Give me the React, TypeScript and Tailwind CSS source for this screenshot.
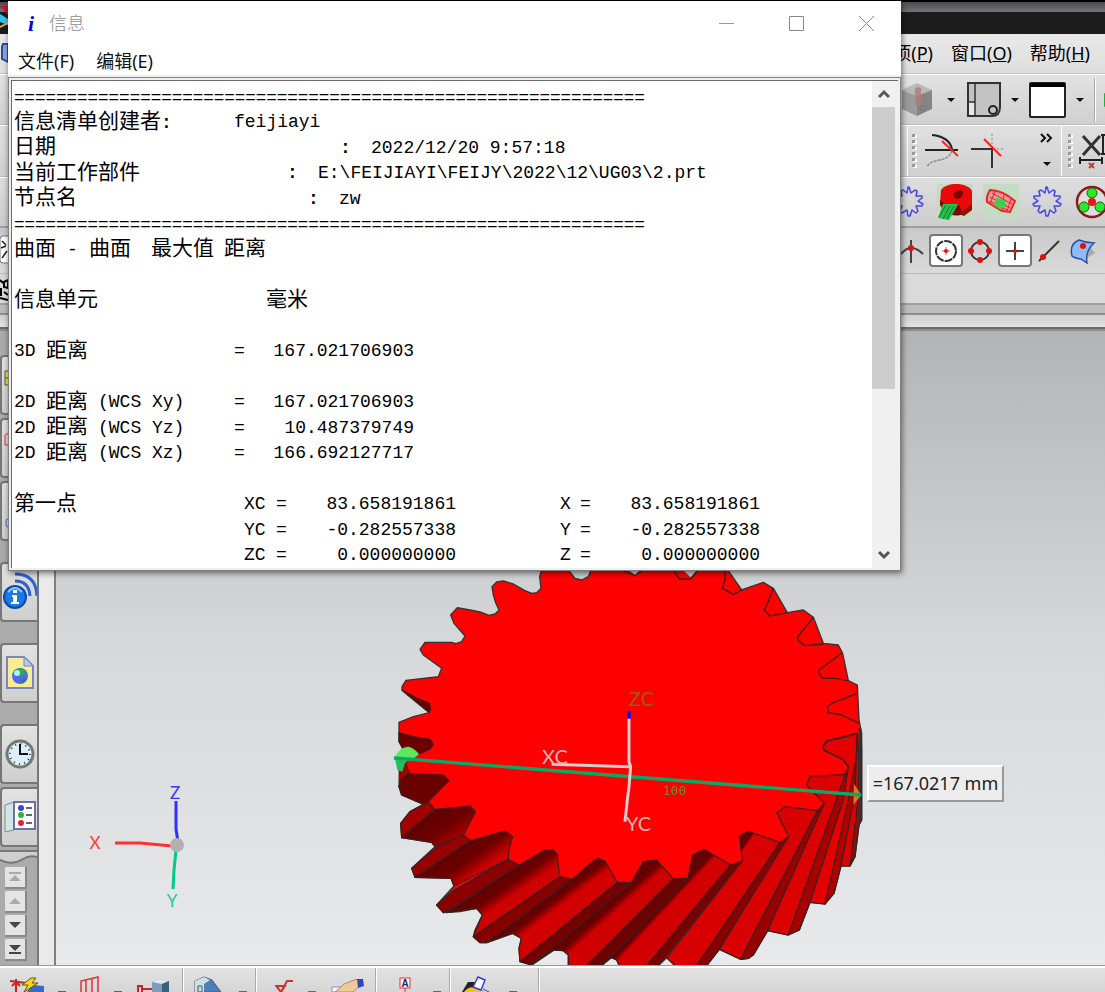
import React from "react";
import clsx from "clsx";

const UI_FONT = "font-['Noto_Sans','Noto_Sans_CJK_SC',sans-serif]";
const LIST_FONT = "font-['Liberation_Mono','Noto_Sans_CJK_SC',monospace]";

interface IconProps {
  width: number;
  height: number;
  className?: string;
  children: React.ReactNode;
}

const Icon = ({ width, height, className, children }: IconProps) => (
  <svg
    width={width}
    height={height}
    viewBox={`0 0 ${width} ${height}`}
    fill="none"
    className={clsx("block shrink-0", className)}
    aria-hidden="true"
  >
    {children}
  </svg>
);

interface ToolProps {
  label: string;
  className?: string;
  children: React.ReactNode;
}

const Tool = ({ label, className, children }: ToolProps) => (
  <button
    type="button"
    aria-label={label}
    className={clsx("flex shrink-0 items-center justify-center", className)}
  >
    {children}
  </button>
);

const Caret = () => (
  <Icon width={8} height={4}>
    <path d="M0 0h8L4 4z" fill="#111" />
  </Icon>
);

const Grip = () => (
  <Icon width={5} height={36}>
    {[1, 7, 13, 19, 25, 31].map((y) => (
      <g key={y}>
        <rect x="1" y={y + 1} width="4" height="3" fill="#fff" />
        <rect x="0" y={y} width="3" height="3" fill="#999" />
      </g>
    ))}
  </Icon>
);

const GearOutline = () => (
  <Icon width={32} height={34}>
    <path
      d="M15 2l1 0 2 6 4-3 2 1-1 5 6 0 0 2-4 3 5 3-1 2-6 0 2 5-2 2-4-3-2 6-2 0-1-6-5 3-2-2 2-5-6 0-1-2 5-3-4-3 0-2 6 0-1-5 2-1 4 3z"
      stroke="#4646ee"
      strokeWidth="1.5"
      strokeLinejoin="round"
    />
  </Icon>
);

const rowClass = "flex shrink-0 items-stretch justify-between overflow-hidden";
const rightClass = "flex w-[204px] items-center";

const TopBars = () => (
  <header className="shrink-0">
    <div className="flex h-[34px] flex-col border-t-2 border-black bg-[#1c1c1c]">
      <div className="h-2.5 bg-linear-to-b from-[#4c4c50] to-[#747478]" />
      <Icon width={8} height={22} className="-mt-1.5">
        <path d="M0 0h8v9z" fill="#d0103a" />
        <path d="M0 8l8 5v6l-8-3z" fill="#33c5ee" />
        <path d="M0 20l8-4v2l-8 4z" fill="#e6b03c" />
      </Icon>
    </div>

    <nav
      className={clsx(
        rowClass,
        UI_FONT,
        "h-10 border-b border-[#c2c2c2] bg-linear-to-b from-[#e9e9e9] to-[#dedede] text-[18px] text-black",
      )}
    >
      <Icon width={8} height={34}>
        <path d="M8 10H3l-1 3v12l6 3z" fill="#88a8e0" stroke="#2a4b9a" strokeWidth="2" />
      </Icon>
      <div className="flex items-center gap-[18px] pr-[15px]">
        <button type="button" className="whitespace-nowrap">
          项(<u>P</u>)
        </button>
        <button type="button" className="whitespace-nowrap">
          窗口(<u>O</u>)
        </button>
        <button type="button" className="whitespace-nowrap">
          帮助(<u>H</u>)
        </button>
      </div>
    </nav>

    <div
      className={clsx(
        rowClass,
        "h-[51px] border-t border-b border-t-white border-b-[#bbb] bg-linear-to-b from-[#e2e2e2] to-[#d0d0d0]",
      )}
    >
      <span />
      <div className={rightClass}>
        <Tool label="Render style" className="w-[34px]">
          <Icon width={34} height={36}>
            <path d="M1 8L16 1l15 7-15 6z" fill="#b9b9b9" />
            <path d="M1 8l15 6v20L1 27z" fill="#9b9b9b" />
            <path d="M31 8l-15 6v20l15-7z" fill="#858585" />
            <path d="M14 6l3-1 3 1v17l-3 1-3-1z" fill="#b07a7a" opacity="0.8" />
            <circle cx="22" cy="26" r="3" stroke="#777" />
          </Icon>
        </Tool>
        <Tool label="Render style menu" className="w-8">
          <Caret />
        </Tool>
        <Tool label="Section" className="w-[34px]">
          <Icon width={34} height={36}>
            <path d="M1 1h32v24q0 9-8 9H1z" fill="#c2c2c2" stroke="#333" strokeWidth="2" />
            <path d="M2 20h6v13H2z" fill="#e8e8e8" />
            <path d="M8 1v33M1 20h7" stroke="#333" strokeWidth="1.5" />
            <circle cx="26" cy="28" r="4" fill="#c2c2c2" stroke="#222" strokeWidth="2" />
          </Icon>
        </Tool>
        <Tool label="Section menu" className="w-7">
          <Caret />
        </Tool>
        <Tool label="Background" className="w-[37px]">
          <Icon width={37} height={36}>
            <rect x="1" y="1" width="35" height="34" rx="1" fill="#fff" stroke="#222" strokeWidth="2" />
            <path d="M1 1h35v4H1z" fill="#000" />
          </Icon>
        </Tool>
        <Tool label="Background menu" className="w-7">
          <Caret />
        </Tool>
        <span className="h-11 w-0.5 shrink-0 border-l border-[#aaa] bg-white" />
        <Icon width={6} height={14} className="ml-2">
          <path d="M0 0l12 7-12 7z" fill="#19b53a" />
        </Icon>
      </div>
    </div>

    <div
      className={clsx(
        rowClass,
        "h-[52px] border-t border-b border-t-white border-b-[#bbb] bg-linear-to-b from-[#e0e0e0] to-[#d0d0d0]",
      )}
    >
      <span />
      <div className={rightClass}>
        <span className="ml-1.5 h-full w-px shrink-0 bg-white" />
        <span className="w-1 shrink-0" />
        <Grip />
        <Tool label="Trim curve" className="ml-2 w-[34px]">
          <Icon width={34} height={36}>
            <path d="M7 2c10 1 18 5 20 14" stroke="#222" strokeWidth="2" />
            <path d="M0 17h33" stroke="#222" strokeWidth="2" />
            <path d="M27 17c-3 14-21 7-25 17" stroke="#888" strokeWidth="1.5" strokeDasharray="3 1" />
            <path d="M17 8l16 15" stroke="#f22" strokeWidth="2" />
          </Icon>
        </Tool>
        <Tool label="Trim corner" className="ml-3 w-[34px]">
          <Icon width={34} height={36}>
            <path d="M0 16h21v19" stroke="#333" strokeWidth="2" />
            <path d="M21 1v15h13" stroke="#888" strokeDasharray="2 2" />
            <path d="M13 6l17 17" stroke="#f22" strokeWidth="2" />
          </Icon>
        </Tool>
        <Tool label="More" className="ml-[34px] w-4">
          <Icon width={14} height={36}>
            <path d="M1 1l4 4-4 4M7 1l4 4-4 4" stroke="#111" strokeWidth="2" />
            <path d="M3 29h8l-4 4z" fill="#111" />
          </Icon>
        </Tool>
        <span className="ml-1.5 h-full w-px shrink-0 bg-white" />
        <span className="w-1.5 shrink-0" />
        <Grip />
        <Tool label="Dimension" className="ml-1.5 w-7">
          <Icon width={28} height={38}>
            <path d="M4 4l17 19M21 4L4 23" stroke="#333" strokeWidth="3" />
            <path d="M24 3v18M22 3h6M22 22h6M1 28h22M1 25v7M23 25v7" stroke="#222" strokeWidth="2" />
            <path d="M10 31l5 5M15 31l-5 5" stroke="#c43b1e" strokeWidth="2" />
          </Icon>
        </Tool>
      </div>
    </div>

    <div
      className={clsx(
        rowClass,
        "h-[51px] border-t border-b-2 border-t-white border-b-[#9f9f9f] bg-linear-to-b from-[#dedede] to-[#cdcdcd]",
      )}
    >
      <span />
      <div className={rightClass}>
        <Tool label="Gear modelling" className="-ml-2 w-8">
          <GearOutline />
        </Tool>
        <Tool label="Helical gear" className="ml-3 w-9">
          <Icon width={36} height={36}>
            <rect width="36" height="36" fill="#c3dcc3" />
            <path d="M4 6c6-8 26-8 31 1v14c-3 9-14 12-22 8L3 20z" fill="#e80a0a" />
            <path d="M3 16l10 8 9-3 4 9c-9 4-18 0-23-9z" fill="#7b0c00" />
            <path d="M22 30l13-10v6l-8 6z" fill="#960f00" />
            <path d="M17 9c4-4 9-3 9 0s-2 5-5 6c-4-1-5-3-4-6z" fill="#7a0500" />
            <path d="M6 20l15 0-3 6-6 10-11-2z" fill="#24c04f" />
            <path d="M9 21L2 33M13 22L6 35M17 22l-7 13" stroke="#0d7c2c" />
          </Icon>
        </Tool>
        <Tool label="Meshing gear" className="ml-2.5 w-9">
          <Icon width={36} height={36}>
            <rect width="36" height="36" fill="#c3dcc3" />
            <path d="M7 6q12 0 25 11l-5 11-8-1-15-9q-1-6 3-12z" fill="#e99" stroke="#f02222" strokeWidth="2" />
            <path d="M9 9l20 11M7 13l20 11M6 17l18 9M12 7l-5 13M21 11l-2 15M28 15l-4 12" stroke="#f02222" />
            <path d="M13 14l9 2 1 7-7 2-5-5z" fill="#3dcf4f" />
          </Icon>
        </Tool>
        <Tool label="Gear profile" className="ml-3 w-8">
          <GearOutline />
        </Tool>
        <Tool label="Planetary gear" className="ml-3 w-8">
          <Icon width={32} height={34}>
            <circle cx="17" cy="17" r="15" fill="#ddd" stroke="#8d1a1a" strokeWidth="2.5" />
            <g fill="#2bea2b" stroke="#176317">
              <circle cx="17" cy="8" r="5" />
              <circle cx="9" cy="22" r="5" />
              <circle cx="25" cy="22" r="5" />
            </g>
            <circle cx="17" cy="17" r="4" fill="#f01515" />
          </Icon>
        </Tool>
      </div>
    </div>

    <div className={clsx(rowClass, "h-[46px] border-b border-[#bbb] bg-linear-to-b from-[#c9c9c9] to-[#dadada]")}>
      <Icon width={8} height={40}>
        <rect x="0" y="8" width="14" height="27" rx="3" fill="#fff" stroke="#777" />
        <path d="M2 13l4 4M1 20l5-2M2 30l5-7" stroke="#222" strokeWidth="1.5" />
      </Icon>
      <div className={rightClass}>
        <Tool label="Intersection point" className="w-6">
          <Icon width={24} height={30}>
            <path d="M0 18q10-12 22 0M10 4v23" stroke="#444" strokeWidth="2" />
            <circle cx="10" cy="12" r="3" fill="#d11" />
          </Icon>
        </Tool>
        <Tool label="Arc center" className="ml-1 h-[33px] w-[34px] rounded border-2 border-[#777] bg-white">
          <Icon width={24} height={24}>
            <circle cx="12" cy="12" r="10" stroke="#333" strokeWidth="2" strokeDasharray="8 1" />
            <path d="M12 8v8M8 12h8" stroke="#d55" />
            <circle cx="12" cy="12" r="2" fill="#d11" />
          </Icon>
        </Tool>
        <Tool label="Quadrant point" className="ml-[5px] w-6">
          <Icon width={24} height={24}>
            <circle cx="12" cy="12" r="9" stroke="#333" strokeWidth="2" />
            <g fill="#d11">
              <circle cx="12" cy="3" r="3" />
              <circle cx="12" cy="21" r="3" />
              <circle cx="3" cy="12" r="3" />
              <circle cx="21" cy="12" r="3" />
            </g>
          </Icon>
        </Tool>
        <Tool label="Existing point" className="ml-1.5 h-[33px] w-[34px] rounded border-2 border-[#777] bg-white">
          <Icon width={20} height={20}>
            <path d="M10 1v18M1 10h18" stroke="#444" strokeWidth="2" />
            <circle cx="10" cy="10" r="2" fill="#d11" />
          </Icon>
        </Tool>
        <Tool label="Point on curve" className="ml-[5px] w-6">
          <Icon width={24} height={24}>
            <path d="M2 22L22 2" stroke="#333" strokeWidth="2" />
            <circle cx="6" cy="18" r="3" fill="#d11" />
          </Icon>
        </Tool>
        <Tool label="Point on surface" className="ml-2 w-7">
          <Icon width={28} height={26}>
            <path d="M18 20l8-5-5-6z" fill="#aaa" />
            <path d="M10 2q7 3 15 3-9 8-7 20l-6-4q-7-1-9-3-3-12 7-16z" fill="#8fbcf6" stroke="#2c4f9e" strokeWidth="1.5" />
            <circle cx="14" cy="8" r="3" fill="#d11" />
          </Icon>
        </Tool>
      </div>
    </div>

    <div className={clsx(rowClass, "h-[31px] border-b-2 border-[#a0a0a0] bg-[#dadada]")}>
      <Icon width={8} height={30}>
        <path d="M0 6l3 3M4 8l4-2v8l-4-1zM1 14v8M0 24l8 2M4 18l4 3" stroke="#000" strokeWidth="2" />
      </Icon>
    </div>
    <div className="h-2 bg-[#bcbcbc]" />
    <div className="h-3.5 border-t-2 border-[#8e8e8e] bg-linear-to-b from-[#cfcfcf] to-[#e4e4e4]" />
    <div className="h-1 border-t-2 border-[#6c6c6c] bg-[#8c8c8c]" />
  </header>
);

const tabClass =
  "flex h-[60px] w-full shrink-0 items-center justify-center rounded-l border-2 border-r-0 border-[#777] bg-linear-to-b from-[#e2e2e2] to-[#cfcfcf]";
const stepClass =
  "flex size-[22px] items-center justify-center border-r-2 border-b-2 border-[#888] bg-[#e4e4e4]";

const ResourceBar = () => (
  <aside className="flex w-[39px] shrink-0 flex-col overflow-hidden border-r-2 border-[#777] bg-[#ababab] pt-6">
    <div className="flex flex-col gap-[3px]">
      <button type="button" aria-label="Assembly Navigator" className={tabClass}>
        <Icon width={34} height={36}>
          <path d="M2 4h12v14H2z" fill="#ede42c" stroke="#555" />
          <path d="M2 11h12M7 18v18" stroke="#555" />
        </Icon>
      </button>
      <button type="button" aria-label="Constraint Navigator" className={tabClass}>
        <Icon width={34} height={36}>
          <path d="M2 5l4-2h4v12H2z" stroke="#d33" />
          <path d="M7 18v18" stroke="#55a" />
        </Icon>
      </button>
      <button type="button" aria-label="Part Navigator" className={tabClass}>
        <Icon width={34} height={36}>
          <path d="M7 2v24" stroke="#58a8e0" strokeWidth="2" />
          <rect x="3" y="26" width="8" height="8" rx="2" stroke="#37c" />
        </Icon>
      </button>
    </div>
    <div className="flex flex-col gap-[21px] pt-[21px]">
      <button type="button" aria-label="Information" className={tabClass}>
        <Icon width={38} height={40}>
          <path d="M14 2q21 0 22 22M14 9q14 0 15 15" stroke="#2e63d0" strokeWidth="3" />
          <circle cx="14" cy="25" r="11" fill="#1a7be8" stroke="#1149a4" strokeWidth="2" />
          <path d="M7 20q7-8 14 0" stroke="#83c4ff" strokeWidth="2" />
          <path d="M11 23h5v7h2v2h-8v-2h2v-5h-1zM12 18h4v3h-4z" fill="#fff" />
        </Icon>
      </button>
      <button type="button" aria-label="Web Browser" className={tabClass}>
        <Icon width={30} height={34}>
          <path d="M2 1h17l9 9v22H2z" fill="#f9ec92" stroke="#7b86bc" strokeWidth="2" />
          <path d="M19 1v9h9z" fill="#bcc6f4" stroke="#7b86bc" />
          <circle cx="15" cy="20" r="8" fill="#4b6bea" />
          <path d="M9 15q5-4 10-2l1 4-5 3-4-1z" fill="#2fae3c" />
          <circle cx="12" cy="17" r="3" fill="#a6f4ee" />
          <path d="M15 27q6 0 7-5l-5 2z" fill="#298060" />
        </Icon>
      </button>
      <button type="button" aria-label="History" className={tabClass}>
        <Icon width={32} height={32}>
          <circle cx="16" cy="16" r="13" fill="#dceefa" stroke="#727a72" strokeWidth="3" />
          <circle cx="16" cy="16" r="10" stroke="#334" strokeWidth="2" strokeDasharray="1 4.24" />
          <path d="M16 6v10h8" stroke="#111" strokeWidth="2" />
        </Icon>
      </button>
    </div>
    <div className="flex flex-col gap-[3px] pt-[3px]">
      <button type="button" aria-label="Roles" className={tabClass}>
        <Icon width={34} height={34}>
          <path d="M2 5l9-3v28l-9 2z" fill="#cfe6e4" stroke="#7c8c8c" />
          <path d="M11 2h21v27H11z" fill="#fff" stroke="#6d70a8" strokeWidth="2" />
          <circle cx="18" cy="8" r="3" fill="#3c48c4" />
          <circle cx="18" cy="15" r="3" fill="#29ba35" />
          <circle cx="18" cy="23" r="3" fill="#e81c40" />
          <path d="M23 8h6M23 15h6M23 23h6" stroke="#666" strokeWidth="2" />
        </Icon>
      </button>
      <Icon width={37} height={14}>
        <path d="M0 0h37v7q-9-2-14 2-9 6-23 2z" fill="#cfcfcf" />
        <path d="M0 1h37M0 10q12 6 23-1 6-4 14-2" stroke="#777" strokeWidth="2" />
      </Icon>
    </div>
    <div className="flex flex-col gap-0.5 pt-[3px] pl-[5px]">
      <button type="button" aria-label="First" className={stepClass}>
        <Icon width={12} height={10}>
          <path d="M0 1h12" stroke="#aaa" strokeWidth="2" />
          <path d="M6 3l6 6H0z" fill="#aaa" />
        </Icon>
      </button>
      <button type="button" aria-label="Previous" className={stepClass}>
        <Icon width={12} height={6}>
          <path d="M6 0l6 6H0z" fill="#aaa" />
        </Icon>
      </button>
      <button type="button" aria-label="Next" className={stepClass}>
        <Icon width={12} height={6}>
          <path d="M6 6l6-6H0z" fill="#444" />
        </Icon>
      </button>
      <button type="button" aria-label="Last" className={stepClass}>
        <Icon width={12} height={10}>
          <path d="M0 9h12" stroke="#444" strokeWidth="2" />
          <path d="M6 7l6-6H0z" fill="#444" />
        </Icon>
      </button>
    </div>
  </aside>
);

// Tooth flanks from left to right: [outline, fill]
const flanks: [string, string][] = [
  ["66,390 110,413 148,430 152,445 148,458", "#6a0000"],
  ["57,518 100,530 150,538 160,553 150,568 115,583 85,600 57,545", "#6a0000"],
  ["85,600 77,610 88,640 65,655 57,680 58,610", "#a80000"],
  ["88,640 190,645 207,662 148,722 130,733 65,705 57,680 65,655", "#6a0000"],
  ["145,725 165,748 65,833 62,790 90,755", "#a00000"],
  ["165,748 270,738 287,755 250,825 165,860 155,847 65,833", "url(#gapB)"],
  ["250,825 272,842 105,952 95,925 165,865", "#990000"],
  ["272,842 375,813 398,830 387,870 385,898 222,978 213,955 105,952", "url(#gapC)"],
  ["385,898 418,915 200,1055 190,1058 170,1035 222,990", "#8b0000"],
  ["418,915 495,870 520,870 533,885 535,920 540,950 280,1130 307,1065 290,1045 200,1058", "url(#gapD)"],
  ["540,950 578,957 320,1148 300,1148 280,1130", "#860000"],
  ["578,957 640,903 655,895 675,903 712,967 420,1205 417,1165 424,1135 398,1120 320,1148", "url(#gapE)"],
  ["712,967 754,968 455,1215 420,1205", "#760000"],
  ["754,968 790,905 830,900 880,957 620,1217 565,1217 565,1185 550,1172 522,1170 455,1215", "url(#gapF)"],
  ["880,957 924,955 665,1217 620,1217", "#6c0000"],
  ["924,955 938,885 972,868 1052,915 800,1217 718,1217 710,1200 695,1193 665,1217", "url(#gapG)"],
  ["1052,915 1087,903 835,1217 800,1217", "#7a0000"],
  ["1087,903 1078,828 1105,814 1200,847 950,1217 885,1217 860,1193", "url(#gapH)"],
  ["1200,847 1226,830 1018,1168 980,1217 950,1217", "#8a0000"],
  ["1226,830 1190,758 1215,740 1312,752 1082,1198 1018,1168", "#d80000"],
  ["1312,752 1333,730 1163,1112 1120,1185 1105,1195 1082,1198", "#9a0000"],
  ["1333,730 1280,675 1290,648 1340,647 1395,643 1378,720 1225,1125 1163,1112", "#dd0000"],
  ["1395,643 1405,620 1390,720 1290,1027 1258,1110 1225,1125", "#a80000"],
  ["1405,620 1390,600 1330,570 1330,555 1342,542 1432,520 1428,620 1410,750 1335,1032 1290,1027 1390,720", "#e40000"],
  ["1428,600 1422,720 1383,918 1362,1000 1335,1032 1400,740", "#b00000"],
  ["1432,520 1440,640 1438,700 1410,918 1383,918 1425,700", "#dc0000"],
  ["1440,520 1445,560 1445,780 1437,795 1425,890 1410,918 1432,740 1437,600", "#8a1010"],
];

const SILHOUETTE =
  "M483 -20L483 35 479 50 483 85 470 98 455 100 435 92 400 72 370 63 350 66 336 80 340 105 347 128 357 150 345 162 327 166 300 156 270 150 232 143 212 165 222 190 255 228 245 245 228 251 215 247 135 247 120 268 130 285 185 325 175 350 130 355 78 361 66 380 66 390 80 403 148 458 100 470 57 487 57 545 75 565 77 610 58 620 65 655 57 680 65 705 130 733 90 755 62 790 65 833 155 847 165 860 95 925 105 952 213 955 222 978 170 1035 190 1058 240 1055 290 1045 307 1065 285 1110 280 1130 300 1148 320 1148 398 1120 424 1135 417 1165 420 1205 455 1215 522 1170 550 1172 565 1185 565 1230H665V1217L680 1200 695 1193 710 1200 718 1217V1230H835V1217L860 1193 885 1217V1230H975L980 1217 1018 1168 1082 1198 1105 1195 1120 1185 1163 1112 1225 1125 1258 1110 1290 1027 1335 1032 1362 1000 1383 918 1410 918 1425 890 1437 795 1445 780 1445 520 1437 480 1432 375 1405 362 1388 280 1375 255 1330 250 1300 172 1270 150 1222 158 1180 85 1150 67 1085 90 1047 35V-20Z";

// Edges of the teeth on the far side, where face and flank have the same red
const FAR_EDGES =
  "M1405 620L1390 600 1332 570 1330 560 1342 542 1380 535 1432 520M1437 490L1385 465 1345 458 1342 440 1355 430 1432 400M1405 362L1365 355 1328 355 1317 340 1317 330 1385 280M1330 252L1275 257 1253 240 1255 228 1300 172M1222 158L1170 168 1153 150 1165 125 1180 85M1085 90L1060 103 1027 85 1035 60V30M883 35L898 57H932L952 35M730 33L765 46 785 33";

const shade = (id: string, x1: number, y1: number, x2: number, y2: number, end: string) => (
  <linearGradient id={id} gradientUnits="userSpaceOnUse" x1={x1} y1={y1} x2={x2} y2={y2}>
    <stop offset="0" stopColor="#640000" />
    <stop offset="0.45" stopColor="#6c0000" />
    <stop offset="1" stopColor={end} />
  </linearGradient>
);

const Model = () => (
  <svg className="absolute inset-0 size-full" fill="none" role="img" aria-label="Helical gear">
    <defs>
      {shade("gapB", 180, 760, 235, 840, "#b00000")}
      {shade("gapC", 275, 845, 325, 915, "#cc0000")}
      {shade("gapD", 410, 925, 445, 975, "#cf0000")}
      {shade("gapE", 560, 970, 586, 1004, "#d20000")}
      {shade("gapF", 710, 1005, 734, 1032, "#cf0000")}
      {shade("gapG", 860, 1015, 876, 1030, "#d20000")}
      {shade("gapH", 1030, 935, 1040, 942, "#d80000")}
    </defs>
    <g transform="translate(-56 -331)">
      <g transform="translate(380 560) scale(0.33333)" strokeLinejoin="round">
        <path d={SILHOUETTE} fill="#f00" stroke="#333" strokeWidth="4" />
        <g stroke="#3a2020" strokeWidth="3.5">
          {flanks.map(([points, fill]) => (
            <polygon key={points} points={points} fill={fill} />
          ))}
        </g>
        <path d={FAR_EDGES} stroke="#3a2020" strokeWidth="4" />
        <path d="M565 30L585 55 605 60 625 50 633 30z" fill="#cbcccd" stroke="#333" strokeWidth="4" />
        <path d="M745 30L765 44 780 30zM908 30L932 52 950 30z" fill="#cbcccd" />
        <path d="M1440 505V785" stroke="#333" strokeWidth="8" />

        <path d="M45 590Q60 560 85 560 105 565 117 583L95 600 60 610z" fill="#5ee85e" />
        <path d="M45 595h45l-15 15-8 25-15-5z" fill="#25bd63" />
        <path d="M1422 672l22 33-24 30z" fill="#d8742c" />
        <path d="M42 594L1444 705" stroke="#0aa865" strokeWidth="10" />

        <path d="M747 475V605L752 620 747 680 742 720 735 785M515 613L655 617 750 620" stroke="#d5cfcf" strokeWidth="9" />
        <path d="M747 453V476" stroke="#00f" strokeWidth="10" />
      </g>

      <g className="font-['Lato','Noto_Sans',sans-serif]" fontSize="20">
        <text x="629" y="706" fill="#a0581c">ZC</text>
        <text x="542" y="764" fill="#e8b4b4">XC</text>
        <text x="626" y="831" fill="#e8b4b4">YC</text>
      </g>
      <text x="663" y="795" fontSize="13" fill="#5f8a30" className="font-['DejaVu_Sans_Mono',monospace]">
        100
      </text>

      <path d="M115 843L140 843 172 846" stroke="#ff3030" strokeWidth="3" />
      <path d="M176 801V829L178 842" stroke="#3030ff" strokeWidth="3" />
      <path d="M176 850L174 870 173 889" stroke="#0c8" strokeWidth="3" />
      <circle cx="177" cy="845" r="7" fill="#b0b0b0" />
      <g className="font-['Lato','Noto_Sans',sans-serif]" fontSize="17" textAnchor="middle">
        <text x="175" y="799" fill="#3a3aff">Z</text>
        <text x="95" y="849" fill="#ff3c3c">X</text>
        <text x="172" y="907" fill="#18cc90">Y</text>
      </g>
    </g>
  </svg>
);

const Viewport = () => (
  <section className="relative min-w-0 flex-1 overflow-hidden bg-linear-to-b from-[#b2b4b6] via-[#d7d8d9] to-[#e7e9ea]">
    <Model />
    <output
      className={clsx(
        UI_FONT,
        "absolute top-[434px] left-[811px] flex h-[37px] w-[137px] items-center justify-center border-2 border-t-white border-l-white border-r-[#999] border-b-[#999] bg-[#ececec] text-[18px] whitespace-nowrap text-[#222]",
      )}
    >
      =167.0217 mm
    </output>
  </section>
);

const Dash = () => <span className="mt-[23px] h-0.5 w-2 shrink-0 self-start bg-[#666]" />;
const Divider = () => <span className="h-full w-0.5 shrink-0 border-l border-[#aaa] bg-white" />;

const BottomBar = () => (
  <footer className="flex h-[26px] shrink-0 overflow-hidden border-t-2 border-white bg-linear-to-b from-[#e2e2e2] to-[#d6d6d6]">
    <div className="flex w-[182px] justify-between pr-3 pl-2.5">
      <Tool label="Rapid dimension">
        <Icon width={34} height={24}>
          <path d="M0 13l24 3M6 11v13M2 18l4-4 4 4" stroke="#c22" strokeWidth="2" />
          <path d="M22 17l12 1v6H17z" fill="#3a68c8" />
          <path d="M21 10h5l-4 5h6L14 24l4-7h-6z" fill="#f7d619" stroke="#665500" />
        </Icon>
      </Tool>
      <Dash />
      <Tool label="Pattern">
        <Icon width={20} height={24}>
          <path d="M1 24V13l17-4v15M6 12v12M12 10v14" stroke="#d33" strokeWidth="1.5" />
        </Icon>
      </Tool>
      <Dash />
      <Tool label="Feature">
        <Icon width={34} height={24}>
          <path d="M2 24v-6h4v6M6 21h10" stroke="#c22" strokeWidth="2" />
          <path d="M16 14l7-3 10 2v11H16z" fill="#7c9db9" />
          <path d="M16 14l7-3 10 2-7 3z" fill="#dce8ee" />
          <path d="M26 16l7-3v11h-7z" fill="#3f5d7c" />
        </Icon>
      </Tool>
    </div>
    <Divider />
    <div className="flex w-[71px] justify-between pr-2 pl-2.5">
      <Tool label="Body">
        <Icon width={28} height={24}>
          <path d="M1 24V13l9-4 8 3 9 12z" fill="#4c80b8" stroke="#557" />
          <path d="M1 24V13l9-4 6 3-6 4v8z" fill="#cde0e4" />
          <path d="M4 18h4v6H4z" stroke="#456" />
        </Icon>
      </Tool>
      <Dash />
    </div>
    <Divider />
    <div className="flex w-[118px] justify-between pr-2.5 pl-[18px]">
      <Tool label="Surface finish">
        <Icon width={18} height={24}>
          <path d="M1 18h9L6 24zM6 24l6-11h6" stroke="#c33" strokeWidth="2" />
        </Icon>
      </Tool>
      <Dash />
      <Tool label="Edit">
        <Icon width={34} height={24}>
          <path d="M1 19h12v5H1z" fill="#fff" stroke="#88c" />
          <path d="M4 24l9-8 13-5 4 6-8 7z" fill="#eec996" stroke="#a88" />
          <path d="M26 11l6 0 1 7-6 2z" fill="#3444c0" />
        </Icon>
      </Tool>
    </div>
    <Divider />
    <div className="flex w-[72px] justify-between pr-2 pl-[22px]">
      <Tool label="Datum">
        <Icon width={12} height={24}>
          <rect x="1" y="10" width="10" height="10" fill="#fff" stroke="#d33" />
          <text x="6" y="19" fontSize="10" fontWeight="700" textAnchor="middle" fill="#226" className="font-['Liberation_Sans',sans-serif]">
            A
          </text>
          <path d="M6 20v4" stroke="#d33" />
        </Icon>
      </Tool>
      <Dash />
    </div>
    <Divider />
    <div className="flex w-[87px] pl-2.5">
      <Tool label="Sketch">
        <Icon width={30} height={24}>
          <path d="M1 24l6-10h7l2 10z" fill="#222" />
          <path d="M3 24q6-9 20-1v1z" fill="#e8c81c" />
          <path d="M12 19l5-10 7 3-4 10z" fill="#fff" stroke="#33f" strokeWidth="1.5" />
          <path d="M22 21l6 3" stroke="#33f" />
        </Icon>
      </Tool>
      <span className="w-[18px] shrink-0" />
      <Dash />
    </div>
    <Divider />
  </footer>
);

interface ListRowProps {
  children?: React.ReactNode;
}

const ListRow = ({ children }: ListRowProps) => (
  <div className="flex min-h-0 flex-1 items-center leading-none whitespace-pre">{children}</div>
);

// Full-width text is set a little larger than the Latin text beside it
const Zh = ({ children }: { children: string }) => (
  <span className="text-[21px] leading-none">{children}</span>
);

const Rule = () => (
  <ListRow>
    <span className="font-['Liberation_Sans',sans-serif]">{"=".repeat(60)}</span>
  </ListRow>
);

const distances = [
  { kind: "3D", plane: "", value: "167.021706903" },
  null,
  { kind: "2D", plane: "(WCS Xy)", value: "167.021706903" },
  { kind: "2D", plane: "(WCS Yz)", value: "10.487379749" },
  { kind: "2D", plane: "(WCS Xz)", value: "166.692127717" },
];

const coordinates = [
  { label: "第一点", axis: "X", value: "83.658191861" },
  { label: "", axis: "Y", value: "-0.282557338" },
  { label: "", axis: "Z", value: "0.000000000" },
];

const Listing = () => (
  <div className={clsx(LIST_FONT, "flex min-w-0 flex-1 flex-col overflow-hidden bg-white pt-[3px] pl-0.5 text-[18px] text-black")}>
    <Rule />
    <ListRow>
      <span className="w-[220px]">
        <Zh>信息清单创建者</Zh>
        <b>:</b>
      </span>
      <span>feijiayi</span>
    </ListRow>
    <ListRow>
      <span className="w-[326px]">
        <Zh>日期</Zh>
      </span>
      <b className="w-[31px]">:</b>
      <span>2022/12/20 9:57:18</span>
    </ListRow>
    <ListRow>
      <span className="w-[273px]">
        <Zh>当前工作部件</Zh>
      </span>
      <b className="w-[31px]">:</b>
      <span>E:\FEIJIAYI\FEIJY\2022\12\UG03\2.prt</span>
    </ListRow>
    <ListRow>
      <span className="w-[294px]">
        <Zh>节点名</Zh>
      </span>
      <b className="w-[31px]">:</b>
      <span>zw</span>
    </ListRow>
    <Rule />
    <ListRow>
      <Zh>曲面</Zh>
      <span className="w-[33px] text-center">-</span>
      <span className="w-[62px]">
        <Zh>曲面</Zh>
      </span>
      <span className="w-[73px]">
        <Zh>最大值</Zh>
      </span>
      <Zh>距离</Zh>
    </ListRow>
    <ListRow />
    <ListRow>
      <span className="w-[252px]">
        <Zh>信息单元</Zh>
      </span>
      <Zh>毫米</Zh>
    </ListRow>
    <ListRow />
    {distances.map((row, i) =>
      row ? (
        <ListRow key={i}>
          <span className="w-8">{row.kind}</span>
          <span className="w-[52px]">
            <Zh>距离</Zh>
          </span>
          <span className="w-[136px]">{row.plane}</span>
          <span className="w-[30px]">=</span>
          <span className="w-[150px] text-right">{row.value}</span>
        </ListRow>
      ) : (
        <ListRow key={i} />
      ),
    )}
    <ListRow />
    {coordinates.map((row) => (
      <ListRow key={row.axis}>
        <span className="w-[230px]">
          <Zh>{row.label}</Zh>
        </span>
        <span className="w-8">{row.axis}C</span>
        <span className="w-4">=</span>
        <span className="w-[164px] text-right">{row.value}</span>
        <span className="w-[104px]" />
        <span className="w-5">{row.axis}</span>
        <span className="w-4">=</span>
        <span className="w-[164px] text-right">{row.value}</span>
      </ListRow>
    ))}
  </div>
);

const InfoWindow = () => (
  <div className="absolute top-px left-2 flex h-[570px] w-[893px] flex-col border-b border-[#808080] bg-white shadow-[1px_2px_6px_rgba(0,0,0,0.55)]">
    <div className={clsx(UI_FONT, "flex h-11 shrink-0 items-center text-[18px] text-[#8c8c8c]")}>
      <span className="w-[41px] pl-5 font-['Liberation_Serif',serif] text-[22px] font-bold text-[#0000f5] italic">i</span>
      <h1 className="flex-1 font-light">信息</h1>
      <Tool label="Minimize" className="h-full w-[70px]">
        <Icon width={15} height={15}>
          <path d="M0 7.5h15" stroke="#999" />
        </Icon>
      </Tool>
      <Tool label="Maximize" className="h-full w-[70px]">
        <Icon width={15} height={15}>
          <path d="M.5 .5h14v14H.5z" stroke="#888" />
        </Icon>
      </Tool>
      <Tool label="Close" className="h-full w-[70px]">
        <Icon width={15} height={15}>
          <path d="M0 0l15 15M15 0L0 15" stroke="#888" />
        </Icon>
      </Tool>
    </div>
    <div className={clsx(UI_FONT, "flex h-8 shrink-0 items-center gap-[22px] border-b-2 border-[#f0f0f0] pt-0.5 pl-2.5 text-[18px] text-[#111]")}>
      <button type="button">文件(F)</button>
      <button type="button">编辑(E)</button>
    </div>
    <div className="flex min-h-0 flex-1 border-t border-r border-l border-[#808080] bg-[#f0f0f0] p-0.5">
      <div className="flex min-w-0 flex-1 border-t border-l border-[#696969]">
        <Listing />
        <div className="mr-[3px] flex w-[23px] shrink-0 flex-col bg-[#f0f0f0]">
          <Tool label="Scroll up" className="h-[26px]">
            <Icon width={12} height={10}>
              <path d="M1 8l5-5 5 5" stroke="#555" strokeWidth="3" />
            </Icon>
          </Tool>
          <div className="h-[282px] bg-[#cdcdcd]" />
          <Tool label="Scroll down" className="mt-auto h-[26px]">
            <Icon width={12} height={10}>
              <path d="M1 2l5 5 5-5" stroke="#555" strokeWidth="3" />
            </Icon>
          </Tool>
        </div>
      </div>
    </div>
  </div>
);

export default function App() {
  return (
    <div className="relative flex h-screen flex-col overflow-hidden bg-[#d6d6d6]">
      <TopBars />
      <main className="flex min-h-0 flex-1 border-b border-[#999]">
        <ResourceBar />
        <div className="w-[17px] shrink-0 border-r-2 border-[#808080] bg-[#eaeaea]" />
        <Viewport />
      </main>
      <BottomBar />
      <InfoWindow />
    </div>
  );
}
